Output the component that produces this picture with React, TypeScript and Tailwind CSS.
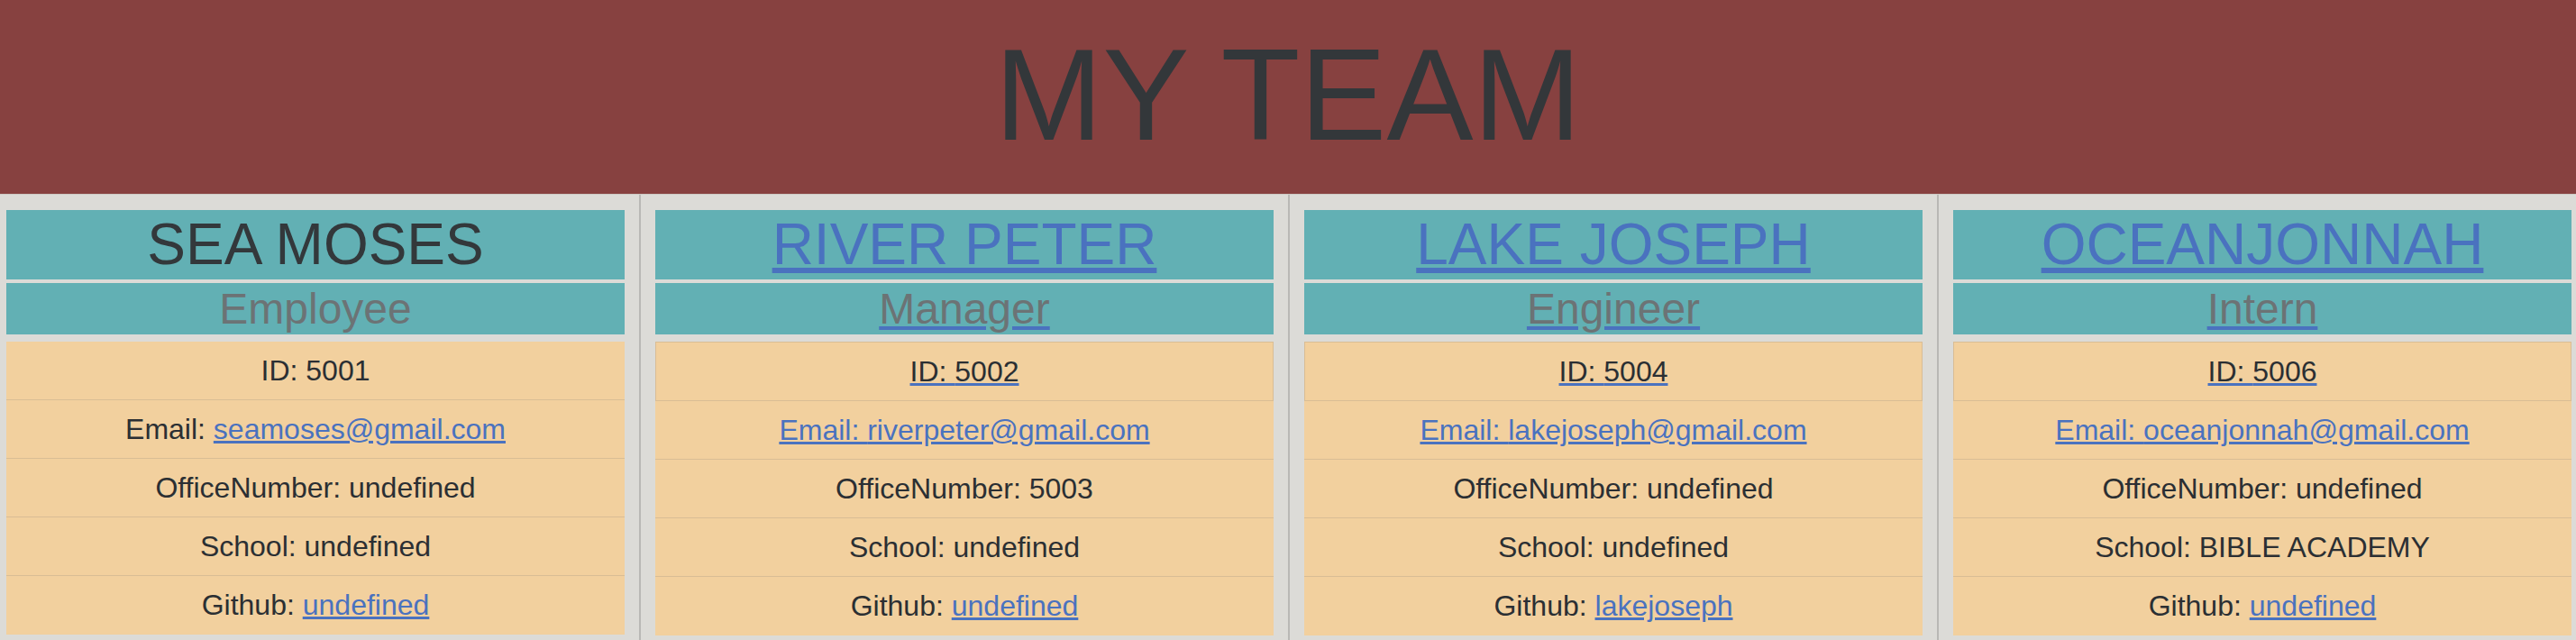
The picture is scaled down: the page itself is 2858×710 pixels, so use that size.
import React from 'react'

type Member = {
  name: string
  role: string
  id: string
  email: string
  office: string
  school: string
  github: string
  linked: boolean
}

const team: Member[] = [
  { name: 'SEA MOSES', role: 'Employee', id: '5001', email: 'seamoses@gmail.com', office: 'undefined', school: 'undefined', github: 'undefined', linked: false },
  { name: 'RIVER PETER', role: 'Manager', id: '5002', email: 'riverpeter@gmail.com', office: '5003', school: 'undefined', github: 'undefined', linked: true },
  { name: 'LAKE JOSEPH', role: 'Engineer', id: '5004', email: 'lakejoseph@gmail.com', office: 'undefined', school: 'undefined', github: 'lakejoseph', linked: true },
  { name: 'OCEANJONNAH', role: 'Intern', id: '5006', email: 'oceanjonnah@gmail.com', office: 'undefined', school: 'BIBLE ACADEMY', github: 'undefined', linked: true },
]

const row = 'py-2 text-center text-[32px] leading-[48px] text-[#2b2f33] border-b border-[#d9bd95]'

const MemberCard = ({ m }: { m: Member }) => {
  return (
    <div className="flex flex-col">
      <h2
        className={
          'bg-[#62b0b4] text-center text-[64px] leading-[1.2] ' +
          (m.linked ? 'text-[#4a72bf] underline' : 'text-[#33383b]')
        }
      >
        {m.name}
      </h2>
      <h3
        className={
          'mt-[4px] bg-[#62b0b4] text-center text-[48px] leading-[1.2] text-[#6c7375] ' +
          (m.linked ? 'underline decoration-[#4a72bf]' : '')
        }
      >
        {m.role}
      </h3>
      <ul className="mt-[8px] bg-[#f2d09e]">
        <li className={m.linked ? row + ' border border-[#d9bd95]' : row}>
          <span className={m.linked ? 'underline decoration-[#4a72bf]' : ''}>ID: {m.id}</span>
        </li>
        <li className={row}>
          {m.linked ? (
            <a className="text-[#4a72bf] underline" href="#">
              Email: {m.email}
            </a>
          ) : (
            <>
              Email:{' '}
              <a className="text-[#4a72bf] underline" href="#">
                {m.email}
              </a>
            </>
          )}
        </li>
        <li className={row}>OfficeNumber: {m.office}</li>
        <li className={row}>School: {m.school}</li>
        <li className="py-2 pb-[9px] text-center text-[32px] leading-[48px] text-[#2b2f33]">
          Github:{' '}
          <a className="text-[#4a72bf] underline" href="#">
            {m.github}
          </a>
        </li>
      </ul>
    </div>
  )
}

export default function App() {
  return (
    <div
      className="min-h-screen flex flex-col bg-[#dcdbd7]"
      style={{ fontFamily: '"Liberation Sans", Arial, Helvetica, sans-serif' }}
    >
      <header className="h-[216px] bg-[#874140] border-b border-[#cdc9c4] pt-[20px]">
        <h1 className="text-center text-[144px] leading-[1.2] text-[#33373a]">MY TEAM</h1>
      </header>
      <main className="flex flex-1">
        {team.map((m, i) => (
          <section
            key={m.id}
            className={
              'flex-1 pt-[17px] ' +
              (i === 0 ? 'pl-[7px] ' : 'pl-[16px] ') +
              (i === team.length - 1 ? 'pr-[5px]' : 'pr-[16px] border-r-2 border-[#b9b8b5]')
            }
          >
            <MemberCard m={m} />
          </section>
        ))}
      </main>
    </div>
  )
}
